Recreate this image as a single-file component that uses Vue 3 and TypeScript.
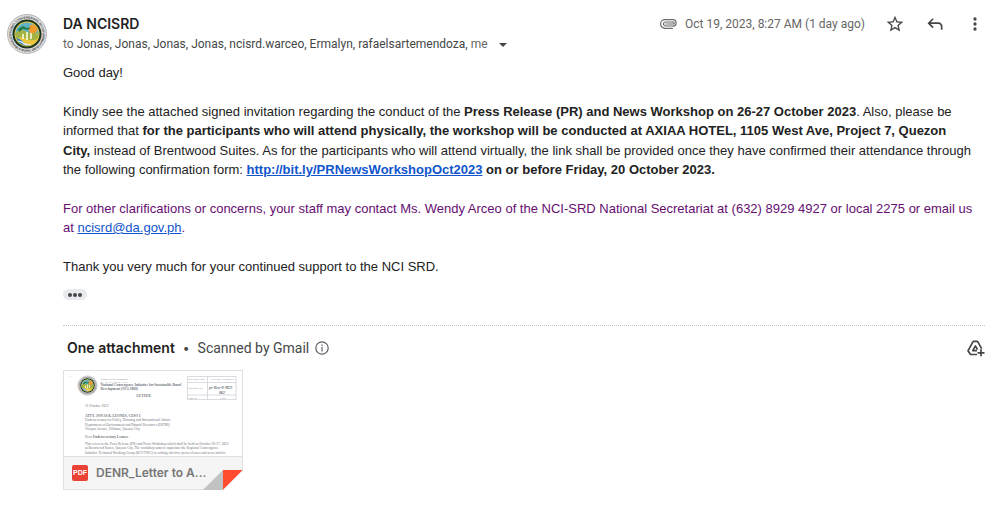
<script setup lang="ts">
interface Recipient {
  name: string
  muted?: boolean
}

const recipients: Recipient[] = [
  { name: 'Jonas' },
  { name: 'Jonas' },
  { name: 'Jonas' },
  { name: 'Jonas' },
  { name: 'ncisrd.warceo' },
  { name: 'Ermalyn' },
  { name: 'rafaelsartemendoza' },
  { name: 'me', muted: true },
]
</script>

<template>
  <main class="message">
    <svg class="avatar" viewBox="0 0 40 40" role="img" aria-label="DA NCISRD">
      <defs>
        <path id="seal-top" d="M4.500 20a15.500 15.500 0 0 1 31 0" />
        <path id="seal-bottom" d="M2.300 20a17.700 17.700 0 0 0 35.400 0" />
        <clipPath id="seal-clip"><circle cx="20" cy="20" r="11.500" /></clipPath>
        <g id="seal">
          <circle cx="20" cy="20" r="19.500" fill="#dedede" stroke="#a8a8a8" stroke-width=".8" />
          <text class="seal-text"><textPath href="#seal-top" startOffset="50%" text-anchor="middle">NATIONAL CONVERGENCE INITIATIVE</textPath></text>
          <text class="seal-text"><textPath href="#seal-bottom" startOffset="50%" text-anchor="middle">SUSTAINABLE RURAL DEVELOPMENT</textPath></text>
          <circle cx="20" cy="20" r="14.500" fill="#17351f" />
          <circle cx="20" cy="20" r="12.500" fill="#f2c93a" />
          <g clip-path="url(#seal-clip)">
            <path d="M7 7h26v15H7z" fill="#5fb4cc" />
            <circle cx="26" cy="15" r="4.500" fill="#f29a2e" />
            <path d="M7 21q5-7 11-4t8 2 8 1v9H7z" fill="#a3b343" />
            <path d="M11 15l5-3 4 2 4-1-3 3-5-1-4 3z" fill="#247c49" />
            <path d="M7 25q8-3 13 0t13-1v9H7z" fill="#ecc63c" />
            <path d="M7 24q6 0 9 4t11 3l-3 4H7z" fill="#2f80cc" />
            <path d="M10 27q4 0 6 2t8 2" fill="none" stroke="#e8f5fa" stroke-width="1.200" />
            <path d="M16 20v5M20 18v8M24 19v6" stroke="#fffbe0" stroke-width="1.600" />
          </g>
        </g>
      </defs>
      <use href="#seal" />
    </svg>

    <div class="content">
      <header class="head">
        <div class="from">
          <h1 class="sender">DA NCISRD</h1>
          <p class="recipients">
            to
            <template v-for="(r, i) in recipients" :key="i"><span :class="{ person: !r.muted }">{{ r.name }}<template v-if="i < recipients.length - 1">,</template></span>{{ ' ' }}</template>
            <button class="details" type="button" aria-label="Show details">
              <svg width="8" height="4" viewBox="0 0 8 4"><path d="M0 0h8L4 4z" fill="#444746" /></svg>
            </button>
          </p>
        </div>
        <div class="meta">
          <svg class="clip" width="17" height="10" viewBox="0 0 17 10" fill="none" stroke="#6b6e6c" stroke-width="1.200" stroke-linecap="round">
            <path d="M14 7H5.500a2 2 0 0 1 0-4H13" />
            <path d="M6 5h7.200a1 1 0 0 0 0-2" />
            <path d="M12.500 9.300H4.900A4.300 4.300 0 0 1 4.900 .7h8a3.200 3.200 0 0 1 .8 6.300" />
          </svg>
          <time datetime="2023-10-19T08:27">Oct 19, 2023, 8:27 AM (1 day ago)</time>
          <button class="icon" type="button" aria-label="Star">
            <svg width="20" height="20" viewBox="0 0 24 24" fill="#444746"><path d="M22 9.240l-7.190-.62L12 2 9.190 8.630 2 9.240l5.460 4.730L5.820 21 12 17.270 18.180 21l-1.630-7.030L22 9.240zM12 15.400l-3.760 2.270 1-4.280-3.320-2.880 4.380-.38L12 6.100l1.710 4.040 4.380.38-3.320 2.880 1 4.280L12 15.400z" /></svg>
          </button>
          <button class="icon" type="button" aria-label="Reply">
            <svg width="20" height="20" viewBox="0 0 24 24" fill="#444746"><path d="M19 19v-4q0-1.250-.875-2.125T16 12H6.825l3.600 3.600L9 17l-6-6 6-6 1.425 1.400-3.600 3.600H16q2.075 0 3.538 1.463T21 15v4z" /></svg>
          </button>
          <button class="icon" type="button" aria-label="More">
            <svg width="20" height="20" viewBox="0 0 24 24" fill="#444746"><circle cx="12" cy="6" r="2" /><circle cx="12" cy="12" r="2" /><circle cx="12" cy="18" r="2" /></svg>
          </button>
        </div>
      </header>

      <article class="body">
        <p>Good day!</p>
        <p>
          Kindly see the attached signed invitation regarding the conduct of the
          <b>Press Release (PR) and News Workshop on 26-27 October 2023</b>. Also, please be informed that
          <b>for the participants who will attend physically, the workshop will be conducted at AXIAA HOTEL, 1105 West Ave, Project 7, Quezon City,</b>
          instead of Brentwood Suites. As for the participants who will attend virtually, the link shall be provided once they have confirmed their attendance through the following confirmation form:
          <b><a href="http://bit.ly/PRNewsWorkshopOct2023">http://bit.ly/PRNewsWorkshopOct2023</a> on or before Friday, 20 October 2023.</b>
        </p>
        <p class="contact">
          For other clarifications or concerns, your staff may contact Ms. Wendy Arceo of the NCI-SRD National Secretariat at (632) 8929 4927 or local 2275 or email us at
          <a href="mailto:ncisrd@da.gov.ph">ncisrd@da.gov.ph</a>.
        </p>
        <p>Thank you very much for your continued support to the NCI SRD.</p>
      </article>
      <button class="trimmed" type="button" aria-label="Show trimmed content">
        <svg width="14" height="4" viewBox="0 0 14 4" fill="#444746"><circle cx="2" cy="2" r="2" /><circle cx="7" cy="2" r="2" /><circle cx="12" cy="2" r="2" /></svg>
      </button>

      <section class="attachments">
        <div class="summary">
          <h2>One attachment</h2>
          <span class="dot">•</span>
          <span class="scanned">Scanned by Gmail</span>
          <button class="plain" type="button" aria-label="About scanning">
            <svg width="14" height="14" viewBox="0 0 14 14" fill="none" stroke="#5f6368" stroke-width="1.200"><circle cx="7" cy="7" r="6.200" /><path d="M7 6v4.400M7 3.600v1.400" /></svg>
          </button>
          <button class="plain drive" type="button" aria-label="Add to Drive">
            <svg width="18" height="17" viewBox="0 0 18 17" fill="none" stroke="#444746" stroke-width="1.700" stroke-linejoin="round">
              <path d="M10 14.500H3.500L1 10.800 6.200 1.300h4.300l4.200 7.400" />
              <path d="M10 10.700H5.800L8.400 5.900l2.100 3.800" />
              <path d="M14 9.300v7M10.500 12.800h7" />
            </svg>
          </button>
        </div>

        <a class="card" href="#attachment">
          <svg class="preview" viewBox="0 0 356 170" aria-hidden="true">
            <rect width="356" height="170" fill="#fff" />
            <use href="#seal" transform="translate(27 9)" />
            <g class="doc">
              <text x="12" y="15">'</text>
              <g class="small">
                <text x="73" y="17">Republic of the Philippines</text>
                <text x="73" y="23">DA · DAR · DENR · DILG</text>
                <text x="249" y="18">Reference Code</text>
                <text x="294" y="18">NCI-SRD / PR-2023-2</text>
                <text x="249" y="36">Reference No.</text>
                <text x="249" y="55">Page No.</text>
                <text x="312" y="55">1 of 2</text>
              </g>
              <g class="strong">
                <text x="73" y="30">National Convergence Initiative for Sustainable Rural</text>
                <text x="73" y="38">Development (NCI-SRD)</text>
                <text x="145" y="51">LETTER</text>
                <text x="42" y="91">ATTY. JONAS R. LEONES, CESO I</text>
              </g>
              <text x="42" y="72">11 October 2023</text>
              <text x="42" y="100">Undersecretary for Policy, Planning and International Affairs</text>
              <text x="42" y="109">Department of Environment and Natural Resources (DENR)</text>
              <text x="42" y="118">Visayas Avenue, Diliman, Quezon City</text>
              <text x="42" y="134">Dear <tspan class="strong">Undersecretary Leones:</tspan></text>
              <text x="42" y="147">This refers to the Press Release (PR) and News Workshop which shall be held on October 26-27, 2023</text>
              <text x="42" y="156">at Brentwood Suites, Quezon City. The workshop aims to capacitate the Regional Convergence</text>
              <text x="42" y="165">Initiative Technical Working Group (RCI-TWG) in writing effective press releases and news articles</text>
              <text class="pen" x="290" y="36">pr-Nov-9-NCI-</text>
              <text class="pen" x="310" y="46">062</text>
            </g>
            <path d="M247 11h97v46h-97zM287 11v46M247 23h97M247 48h97" fill="none" stroke="#c9ccd2" stroke-width="1.400" />
          </svg>
          <div class="file">
            <span class="pdf">PDF</span>
            <span class="filename">DENR_Letter to A...</span>
          </div>
          <svg class="fold" width="40" height="20" viewBox="0 0 40 20"><path d="M0 20L20 0v20z" fill="#c2c2c2" /><path d="M20 0h20L20 20z" fill="#ff4b2e" /><path d="M40 0v20H20z" fill="#fff" /></svg>
        </a>
      </section>
    </div>
  </main>
</template>

<style>
body {
  background: #fff;
}
</style>

<style scoped>
.message {
  display: flex;
  gap: 16px;
  padding: 14px 19px 22px 7px;
  color: #222;
  font-family: "Liberation Sans", Arial, sans-serif;
  font-size: 13px;
}
.avatar {
  flex: none;
  width: 40px;
  height: 40px;
}
.seal-text {
  font: bold 3px "Liberation Sans", sans-serif;
  fill: #444;
}
.content {
  flex: 1;
  min-width: 0;
}
.head {
  display: flex;
  justify-content: space-between;
  height: 49px;
}
.sender {
  margin: 0;
  color: #1f1f1f;
  font: 600 14px/20px Inter, sans-serif;
}
.recipients {
  margin: 0;
  color: #666;
  font: 12px/20px Roboto, sans-serif;
  white-space: nowrap;
}
.person {
  color: #444746;
}
button {
  display: inline-flex;
  align-items: center;
  justify-content: center;
  padding: 0;
  border: 0;
  background: none;
  cursor: pointer;
}
.details {
  height: 8px;
  margin-left: 8px;
  vertical-align: middle;
}
.meta {
  display: flex;
  align-items: center;
  height: 20px;
  color: #666;
  font: 12px/20px Roboto, sans-serif;
  white-space: nowrap;
}
.clip {
  margin-right: 8px;
}
.icon {
  width: 20px;
  height: 20px;
  margin-left: 20px;
}
.body {
  padding-right: 10px;
  line-height: 1.5;
}
.body p {
  margin: 0 0 19px;
}
.body p:last-child {
  margin-bottom: 13px;
}
a {
  color: #1155cc;
}
.contact {
  color: #660e72;
}
.trimmed {
  display: flex;
  width: 24px;
  height: 11px;
  border-radius: 6px;
  background: #e8eaed;
}
.attachments {
  margin-top: 25px;
  border-top: 1px dotted #c4c4c4;
}
.summary {
  display: flex;
  align-items: center;
  height: 44px;
  padding-left: 4px;
  color: #444746;
  font: 14px/20px Roboto, sans-serif;
}
.summary h2 {
  margin: 0;
  color: #1f1f1f;
  font: 600 14px/20px Inter, sans-serif;
}
.dot {
  margin: 0 8px;
  font: 12px/20px Inter, sans-serif;
}
.plain {
  margin-left: 6px;
}
.drive {
  margin-left: auto;
}
.card {
  position: relative;
  display: block;
  width: 180px;
  box-sizing: border-box;
  border: 1px solid #e0e0e0;
  text-decoration: none;
}
.preview {
  display: block;
  width: 100%;
}
.doc {
  font: 7px "Liberation Serif", serif;
  fill: #6f747b;
}
.small {
  font-size: 5px;
}
.strong {
  font-weight: bold;
}
.pen {
  font: italic 8px "Liberation Serif", serif;
  fill: #20262e;
}
.file {
  display: flex;
  align-items: center;
  gap: 8px;
  height: 32px;
  padding-left: 8px;
  border-top: 1px solid #e0e0e0;
  background: #f5f5f5;
}
.pdf {
  width: 16px;
  border-radius: 2px;
  background: #ea4335;
  color: #fff;
  font: bold 7px/16px "Liberation Sans", sans-serif;
  text-align: center;
}
.filename {
  color: #777;
  font: 600 12px/20px Inter, sans-serif;
}
.fold {
  position: absolute;
  right: -1px;
  bottom: -1px;
}
</style>
